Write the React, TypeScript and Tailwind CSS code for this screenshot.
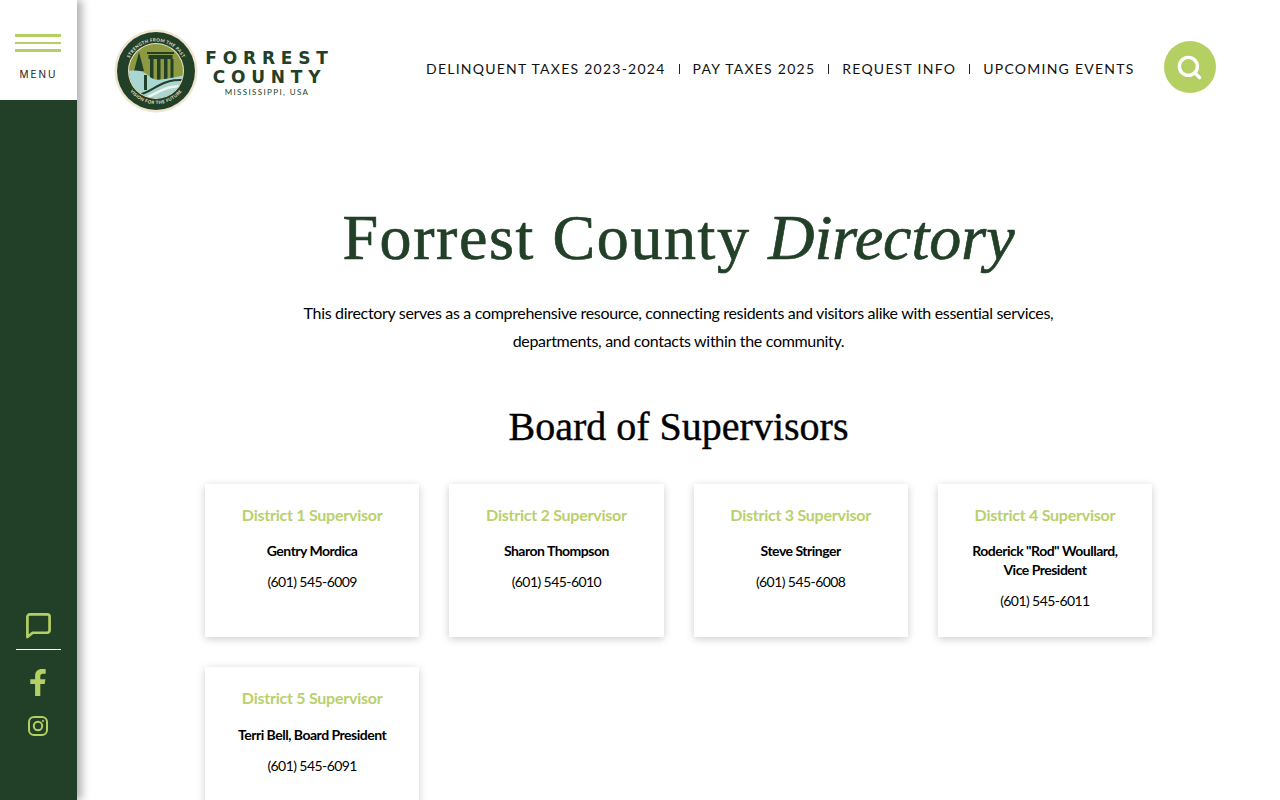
import { Search } from "lucide-react";

const cards = [
  { t: "District 1 Supervisor", n: ["Gentry Mordica"], p: "(601) 545-6009" },
  { t: "District 2 Supervisor", n: ["Sharon Thompson"], p: "(601) 545-6010" },
  { t: "District 3 Supervisor", n: ["Steve Stringer"], p: "(601) 545-6008" },
  { t: "District 4 Supervisor", n: ['Roderick "Rod" Woullard,', "Vice President"], p: "(601) 545-6011" },
  { t: "District 5 Supervisor", n: ["Terri Bell, Board President"], p: "(601) 545-6091" },
];

const nav = ["DELINQUENT TAXES 2023-2024", "PAY TAXES 2025", "REQUEST INFO", "UPCOMING EVENTS"];

function Seal() {
  return (
    <svg width="84" height="84" viewBox="0 0 84 84" className="shrink-0">
      <defs>
        <clipPath id="inner"><circle cx="42" cy="42" r="27" /></clipPath>
        <path id="top" d="M12.500 42a29.500 29.500 0 0 1 59 0" />
        <path id="bot" d="M9 42a33 33 0 0 0 66 0" />
      </defs>
      <circle cx="42" cy="42" r="41.5" fill="#efe6d2" />
      <circle cx="42" cy="42" r="39" fill="#223f28" />
      <circle cx="42" cy="42" r="28" fill="#e8e4c8" />
      <g clipPath="url(#inner)">
        <rect x="10" y="10" width="64" height="64" fill="#8d9a3f" />
        <path d="M20 42l5-19 5 19z" fill="#223f28" />
        <rect x="33" y="23" width="27" height="2" fill="#223f28" />
        <rect x="34.500" y="26" width="24" height="4" fill="#223f28" />
        <rect x="36" y="30" width="3.500" height="21" fill="#223f28" />
        <rect x="43" y="30" width="3.500" height="21" fill="#223f28" />
        <rect x="50" y="30" width="3.500" height="21" fill="#223f28" />
        <rect x="56.500" y="30" width="3" height="19" fill="#223f28" />
        <path d="M12 42c9-1 17-1 23 5s12 4 37-1v28H12z" fill="#a9d6d2" />
        <path d="M24 66c9-1 16-8 26-12s14-3 24-3" fill="none" stroke="#223f28" strokeWidth="2" />
        <path d="M28 70c12-3 20-11 30-12s12-2 16-2" fill="none" stroke="#f2f4ea" strokeWidth="2.500" />
        <rect x="30" y="46" width="3" height="15" fill="#223f28" />
      </g>
      <text fontSize="4.4" fontWeight="700" fill="#efe6d2" letterSpacing="0.35" style={{ fontFamily: "Lato, sans-serif" }}>
        <textPath href="#top" startOffset="50%" textAnchor="middle">STRENGTH FROM THE PAST</textPath>
      </text>
      <text fontSize="4.4" fontWeight="700" fill="#efe6d2" letterSpacing="0.35" style={{ fontFamily: "Lato, sans-serif" }}>
        <textPath href="#bot" startOffset="50%" textAnchor="middle">VISION FOR THE FUTURE</textPath>
      </text>
    </svg>
  );
}

function Card({ t, n, p }: { t: string; n: string[]; p: string }) {
  return (
    <div className="h-[153.300px] bg-white px-3 pt-[21px] text-center shadow-[0_2px_8px_rgba(0,0,0,0.2)]">
      <h3 className="text-[16px] leading-5 font-bold tracking-[-0.25px] text-[#b9d06e]">{t}</h3>
      <p className="mt-[16.300px] text-[14px] leading-[19px] font-bold tracking-[-0.5px] text-black">
        {n.map((x) => (
          <span key={x} className="block">{x}</span>
        ))}
      </p>
      <p className="mt-[12px] text-[14px] leading-[19px] tracking-[-0.57px] text-black">{p}</p>
    </div>
  );
}

export default function App() {
  return (
    <div className="flex h-screen overflow-hidden bg-white font-['Lato',sans-serif] text-black">
      <aside className="z-10 flex w-[77px] shrink-0 flex-col shadow-[5px_0_8px_rgba(0,0,0,0.3)]">
        <div className="flex h-[100px] flex-col items-center bg-white pt-[34px]">
          <div className="mr-[1px] flex w-[46px] flex-col gap-[5px]">
            <span className="h-[2.500px] bg-[#b5d062]" />
            <span className="h-[2.500px] bg-[#b5d062]" />
            <span className="h-[2.500px] bg-[#b5d062]" />
          </div>
          <span className="mt-[16px] font-['Inter',sans-serif] text-[10px] leading-[12px] tracking-[0.2em] text-[#222]">MENU</span>
        </div>
        <div className="flex flex-1 flex-col items-center justify-end bg-[#223f28] pb-[64px]">
          <svg width="27" height="27" viewBox="0 0 28 28" fill="none" stroke="#b5d062" strokeWidth="2.800" strokeLinejoin="round" className="mr-px mb-[10px]">
            <path d="M5 2.500h18a2.500 2.500 0 0 1 2.500 2.500v14a2.500 2.500 0 0 1-2.500 2.500H8l-5.500 4.500V5A2.500 2.500 0 0 1 5 2.500z" />
          </svg>
          <div className="mr-px h-px w-[45px] bg-white" />
          <svg width="16" height="27" viewBox="0 0 16 28" fill="#b5d062" className="mt-[19px] mr-px">
            <path d="M5 28V15.500H0V10.500H5V7C5 2.500 8 0 12 0c1.600 0 3 .1 4 .3v4.500h-2.600C11 4.800 10.400 6 10.400 7.500v3h5.300l-.8 5h-4.500V28z" />
          </svg>
          <svg width="20" height="20" viewBox="0 0 20 20" fill="none" stroke="#b5d062" strokeWidth="2" className="mt-[20px] mr-px">
            <rect x="1" y="1" width="18" height="18" rx="5" />
            <circle cx="10" cy="10" r="4.200" />
            <circle cx="15" cy="5" r="0.700" fill="#b5d062" strokeWidth="0.800" />
          </svg>
        </div>
      </aside>

      <main className="min-w-0 flex-1">
        <header className="flex h-[134px] items-start pt-[29px] pl-[37px]">
          <div className="flex items-center gap-[7px]">
            <Seal />
            <div className="flex w-[129px] flex-col items-center pt-[3px] font-['DejaVu_Sans',sans-serif] text-[#223f28]">
              <span className="text-[17px] leading-[19px] font-bold tracking-[5.800px] whitespace-nowrap">FORREST</span>
              <span className="text-[17px] leading-[18px] font-bold tracking-[5.800px] whitespace-nowrap">COUNTY</span>
              <span className="mt-[1px] mr-[5px] font-['Lato',sans-serif] text-[8px] leading-[10px] tracking-[0.17em] whitespace-nowrap">MISSISSIPPI, USA</span>
            </div>
          </div>
          <nav className="ml-[92px] flex items-center pt-[31px] text-[14px] leading-[18px] tracking-[1.25px] whitespace-nowrap text-[#111]">
            {nav.map((x, i) => (
              <span key={x} className="flex items-center">
                {i > 0 && <span className="mx-[13px] h-[10px] w-px bg-[#222]" />}
                {x}
              </span>
            ))}
          </nav>
          <button className="mt-[12px] ml-[29px] flex h-[52px] w-[52px] shrink-0 items-center justify-center rounded-full bg-[#b5d062]">
            <Search size={27} strokeWidth={3} color="#fff" />
          </button>
        </header>

        <section className="flex flex-col items-center">
          <h1 className="mt-[66px] font-['Liberation_Serif',serif] text-[64px] leading-[76px] tracking-[1.6px] text-[#223f28] [-webkit-text-stroke:0.7px_#223f28]">
            Forrest County <em className="tracking-[0px]">Directory</em>
          </h1>
          <p className="mt-[23px] w-[780px] text-center text-[16px] leading-[28px] tracking-[-0.32px] text-black">
            This directory serves as a comprehensive resource, connecting residents and visitors alike with essential services, departments, and contacts within the community.
          </p>
          <h2 className="mt-[49px] font-['Liberation_Serif',serif] text-[40px] leading-[46px] text-black [-webkit-text-stroke:0.4px_#000]">Board of Supervisors</h2>
          <div className="mt-[34.100px] grid w-[947px] grid-cols-4 gap-[30px]">
            {cards.map((c) => (
              <Card key={c.t} {...c} />
            ))}
          </div>
        </section>
      </main>
    </div>
  );
}
